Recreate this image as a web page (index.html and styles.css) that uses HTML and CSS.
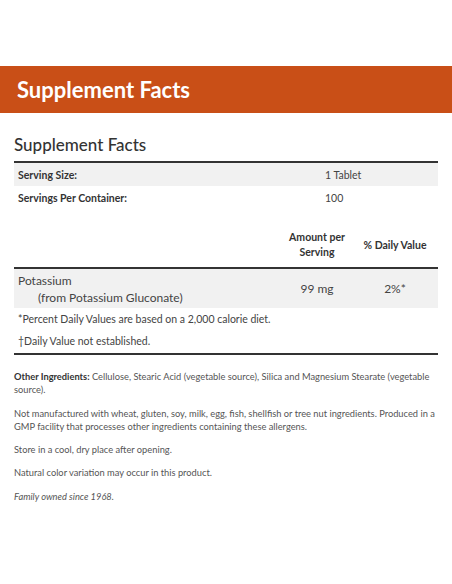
FILE: index.html
```html
<!DOCTYPE html>
<html>
<head>
<meta charset="utf-8">
<link rel="stylesheet" href="styles.css">
</head>
<body>
<div class="band"><h1 class="band-title">Supplement Facts</h1></div>
<div class="content">
  <h2 class="facts-title">Supplement Facts</h2>
  <table class="serving">
    <tr class="shade"><th>Serving Size:</th><td>1 Tablet</td></tr>
    <tr><th>Servings Per Container:</th><td>100</td></tr>
  </table>
  <table class="nutrients">
    <thead>
      <tr><th class="name-col"></th><th class="amt-col">Amount per<br>Serving</th><th class="dv-col">% Daily Value</th></tr>
    </thead>
    <tbody>
      <tr class="shade nutrient">
        <td class="name-col">Potassium<br><span class="sub">(from Potassium Gluconate)</span></td>
        <td class="amt-col">99 mg</td>
        <td class="dv-col">2%*</td>
      </tr>
      <tr class="note"><td colspan="3">*Percent Daily Values are based on a 2,000 calorie diet.</td></tr>
      <tr class="note last"><td colspan="3">†Daily Value not established.</td></tr>
    </tbody>
  </table>
  <div class="info">
    <p><b>Other Ingredients:</b> Cellulose, Stearic Acid (vegetable source), Silica and Magnesium Stearate (vegetable source).</p>
    <p>Not manufactured with wheat, gluten, soy, milk, egg, fish, shellfish or tree nut ingredients. Produced in a GMP facility that processes other ingredients containing these allergens.</p>
    <p>Store in a cool, dry place after opening.</p>
    <p>Natural color variation may occur in this product.</p>
    <p><i>Family owned since 1968.</i></p>
  </div>
</div>
</body>
</html>
```
FILE: styles.css
```css
html, body { margin: 0; padding: 0; background: #fff; }
body { font-family: "Lato", "Nunito", "Open Sans", sans-serif; color: #333; width: 452px; }
.band { margin-top: 66px; height: 47px; background: #c94f17; display: flex; align-items: center; padding-left: 17px; }
.band-title { margin: 0; color: #fff; font-size: 22px; font-weight: 700; letter-spacing: 0; }
.content { padding: 0 14px; }
.facts-title { margin: 21px 0 5px; font-size: 17px; font-weight: 500; line-height: 22px; color: #333; }
table { border-collapse: collapse; width: 100%; }
.serving { border-top: 2px solid #333; }
.serving th, .serving td { height: 23px; padding: 0 4px; font-size: 10.5px; text-align: left; vertical-align: middle; }
.serving th { font-weight: 700; width: 299px; }
.serving td { font-weight: 400; color: #444; }
.shade { background: #f1f1f1; }
.nutrients { margin-top: 17px; border-bottom: 2px solid #333; }
.nutrients thead th { font-size: 10.5px; font-weight: 700; line-height: 15px; padding: 4px 0 7px; border-bottom: 2px solid #333; vertical-align: middle; }
.name-col { text-align: left; }
.amt-col { width: 70px; text-align: center; }
.dv-col { width: 86px; text-align: center; }
.nutrient td { font-size: 12px; line-height: 17px; padding: 3px 4px 2px; color: #444; vertical-align: middle; }
.nutrient .amt-col, .nutrient .dv-col { padding: 0; }
.sub { padding-left: 20px; }
.note td { font-size: 10.5px; height: 22px; padding: 0 4px; color: #444; }
.note.last td { padding-bottom: 1px; }
.info { padding-top: 5px; }
.info p { margin: 10px 0 0; font-size: 9.3px; line-height: 13.3px; color: #555; }
.info b { color: #333; }
```
